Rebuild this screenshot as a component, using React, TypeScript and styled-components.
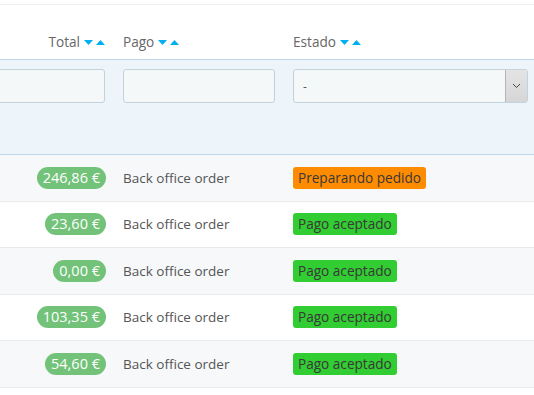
import styled, { createGlobalStyle } from 'styled-components'

type Order = {
  total: string
  payment: string
  state: 'preparing' | 'accepted'
}

const ORDERS: Order[] = [
  { total: '246,86 €', payment: 'Back office order', state: 'preparing' },
  { total: '23,60 €', payment: 'Back office order', state: 'accepted' },
  { total: '0,00 €', payment: 'Back office order', state: 'accepted' },
  { total: '103,35 €', payment: 'Back office order', state: 'accepted' },
  { total: '54,60 €', payment: 'Back office order', state: 'accepted' },
]

const STATE_LABELS = {
  preparing: 'Preparando pedido',
  accepted: 'Pago aceptado',
}

const GlobalStyle = createGlobalStyle`
  html, body {
    margin: 0;
    padding: 0;
    background: #ffffff;
  }
  body {
    font-family: "Open Sans", "Liberation Sans", sans-serif;
    color: #555555;
  }
`

const Viewport = styled.div`
  width: 534px;
  height: 395px;
  overflow: hidden;
  padding-top: 4px;
  box-sizing: border-box;
`

const Table = styled.table`
  border-collapse: collapse;
  table-layout: fixed;
  width: 620px;
  margin-left: -60px;
  border-top: 1px solid #eeeeee;
`

const HeadCell = styled.th<{ $align?: 'left' | 'right' }>`
  height: 46px;
  padding: 0 9px 8px;
  vertical-align: bottom;
  text-align: ${(p) => p.$align ?? 'left'};
  font-weight: 400;
  font-size: 13.6px;
  color: #666666;
  white-space: nowrap;
`

const SortIcons = styled.span`
  display: inline-flex;
  gap: 3px;
  margin-left: 4px;
  vertical-align: 2px;
`

const FilterRow = styled.tr`
  background: #edf5fb;
  border-top: 1px solid #bcd8ea;
  border-bottom: 1px solid #bcd8ea;
`

const FilterCell = styled.td`
  height: 85px;
  padding: 9px 9px 0;
  vertical-align: top;
`

const TextInput = styled.div`
  height: 34px;
  box-sizing: border-box;
  border: 1px solid #c4d3db;
  border-radius: 3px;
  background: #f5f8f9;
`

const SelectBox = styled.div`
  display: flex;
  height: 34px;
  width: 235px;
  box-sizing: border-box;
  border: 1px solid #c4d3db;
  border-radius: 3px;
  background: #f5f8f9;
  font-size: 12px;
  color: #555555;
  overflow: hidden;
`

const SelectValue = styled.span`
  flex: 1;
  padding: 8px 0 0 9px;
`

const SelectArrow = styled.span`
  width: 21px;
  display: flex;
  align-items: center;
  justify-content: center;
  background: linear-gradient(#e4e4e4, #d6d6d6);
  border-left: 1px solid #b5b5b5;
`

const Row = styled.tr<{ $odd: boolean }>`
  background: ${(p) => (p.$odd ? '#f6f8fa' : '#ffffff')};
  border-bottom: 1px solid #e7ebee;
`

const Cell = styled.td<{ $align?: 'left' | 'right' }>`
  height: 45.5px;
  padding: 0 8px 0 9px;
  text-align: ${(p) => p.$align ?? 'left'};
  vertical-align: middle;
  font-size: 13.5px;
  color: #555555;
  white-space: nowrap;
`

const TotalBadge = styled.span`
  display: inline-block;
  height: 22px;
  line-height: 22px;
  padding: 0 6px;
  border-radius: 11px;
  background: #72c279;
  color: #ffffff;
  font-size: 14.5px;
`

const StateBadge = styled.span<{ $state: Order['state'] }>`
  display: inline-block;
  height: 22px;
  line-height: 22px;
  padding: 0 5px;
  border-radius: 3px;
  background: ${(p) => (p.$state === 'preparing' ? '#ff8c00' : '#32cd32')};
  color: #383838;
  font-size: 13.6px;
`

function SortArrows() {
  return (
    <SortIcons>
      <svg width="9" height="5" viewBox="0 0 9 5">
        <path d="M0 0h9L4.5 5z" fill="#00aff0" />
      </svg>
      <svg width="9" height="5" viewBox="0 0 9 5">
        <path d="M0 5h9L4.5 0z" fill="#00aff0" />
      </svg>
    </SortIcons>
  )
}

export default function App() {
  return (
    <Viewport>
      <GlobalStyle />
      <Table>
        <colgroup>
          <col style={{ width: 174 }} />
          <col style={{ width: 170 }} />
          <col style={{ width: 276 }} />
        </colgroup>
        <thead>
          <tr>
            <HeadCell $align="right">
              Total
              <SortArrows />
            </HeadCell>
            <HeadCell>
              Pago
              <SortArrows />
            </HeadCell>
            <HeadCell>
              Estado
              <SortArrows />
            </HeadCell>
          </tr>
          <FilterRow>
            <FilterCell>
              <TextInput />
            </FilterCell>
            <FilterCell>
              <TextInput />
            </FilterCell>
            <FilterCell>
              <SelectBox>
                <SelectValue>-</SelectValue>
                <SelectArrow>
                  <svg width="9" height="6" viewBox="0 0 9 6">
                    <path d="M1 1l3.5 3.5L8 1" fill="none" stroke="#444" strokeWidth="1" />
                  </svg>
                </SelectArrow>
              </SelectBox>
            </FilterCell>
          </FilterRow>
        </thead>
        <tbody>
          {ORDERS.map((order, i) => (
            <Row key={i} $odd={i % 2 === 0}>
              <Cell $align="right">
                <TotalBadge>{order.total}</TotalBadge>
              </Cell>
              <Cell>{order.payment}</Cell>
              <Cell>
                <StateBadge $state={order.state}>{STATE_LABELS[order.state]}</StateBadge>
              </Cell>
            </Row>
          ))}
        </tbody>
      </Table>
    </Viewport>
  )
}
